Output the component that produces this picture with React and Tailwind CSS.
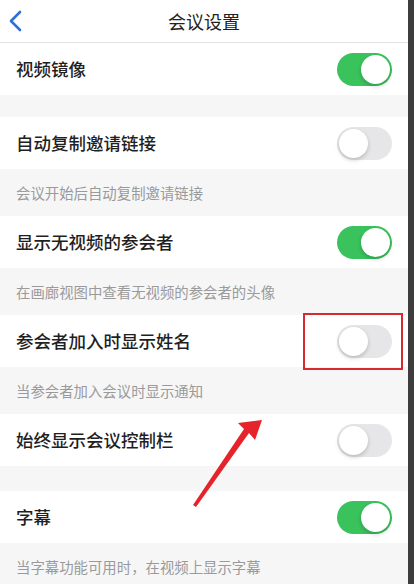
import React from 'react';

// 会议设置的各项
const ITEMS = [
  { title: '视频镜像', on: true },
  { gap: 'h-[22px]' },
  { title: '自动复制邀请链接', on: false, desc: '会议开始后自动复制邀请链接' },
  { title: '显示无视频的参会者', on: true, desc: '在画廊视图中查看无视频的参会者的头像' },
  { title: '参会者加入时显示姓名', on: false, desc: '当参会者加入会议时显示通知', marked: true },
  { title: '始终显示会议控制栏', on: false },
  { gap: 'h-[25px]' },
  { title: '字幕', on: true, desc: '当字幕功能可用时，在视频上显示字幕' },
];

function Toggle({ on }) {
  return (
    <div
      className={
        on
          ? 'w-[55px] h-[33px] rounded-full bg-[#3ac25c] flex items-center justify-end p-[2px]'
          : 'w-[55px] h-[33px] rounded-full bg-[#e6e6e8] flex items-center justify-start p-[2px]'
      }
    >
      <div className="w-[29px] h-[29px] rounded-full bg-white shadow-[0_2px_4px_rgba(0,0,0,0.2)]" />
    </div>
  );
}

export default function App() {
  return (
    <div
      className="flex w-[414px] h-[584px] overflow-hidden bg-[#f6f6f7]"
      style={{ fontFamily: '"Noto Sans CJK SC", "Noto Sans", sans-serif' }}
    >
      <div className="relative w-[408px] flex flex-col">
        {/* 顶部栏 */}
        <div className="relative h-[43px] shrink-0 bg-white border-b border-[#e2e2e2] flex items-center justify-center">
          <svg className="absolute left-[8px] top-[10px]" width="16" height="22" viewBox="0 0 16 22">
            <path d="M12 2 L3 11 L12 20" fill="none" stroke="#2f6fdc" strokeWidth="2.6" strokeLinecap="round" strokeLinejoin="round" />
          </svg>
          <span className="text-[18px] text-[#222] leading-none">会议设置</span>
        </div>

        {ITEMS.map((item, i) =>
          item.gap ? (
            <div key={i} className={item.gap + ' shrink-0'} />
          ) : (
            <div key={i} className="shrink-0">
              <div className="relative h-[52px] bg-white flex items-center justify-between pl-[16px] pr-[16px]">
                <span className="text-[17.5px] font-medium text-[#1f1f1f]">{item.title}</span>
                <Toggle on={item.on} />
                {item.marked && (
                  <div className="absolute left-[303px] top-[-2px] w-[100px] h-[57px] border-2 border-[#d42a30]" />
                )}
              </div>
              {item.desc && (
                <div className="h-[47px] flex items-center pl-[16px] text-[14.4px] text-[#9a9a9a]">{item.desc}</div>
              )}
            </div>
          )
        )}

        {/* 红色箭头 */}
        <svg className="absolute left-0 top-0 pointer-events-none" width="408" height="584">
          <polygon points="262,420 255,440 249,433 196,507 193,505 244,429 238,423" fill="#e4232b" />
        </svg>
      </div>
      <div className="w-[6px] bg-[#3d3d3d]" />
    </div>
  );
}
